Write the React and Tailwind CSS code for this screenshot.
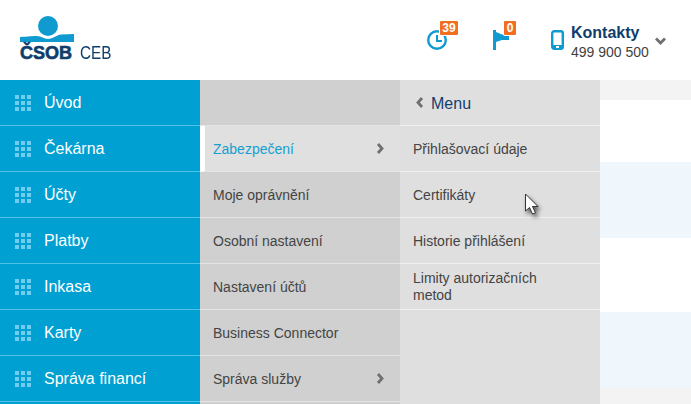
import React from 'react';

const mainLinks = ['Úvod', 'Čekárna', 'Účty', 'Platby', 'Inkasa', 'Karty', 'Správa financí'];
const subLinks = [
  { label: 'Zabezpečení', active: true, arrow: true },
  { label: 'Moje oprávnění' },
  { label: 'Osobní nastavení' },
  { label: 'Nastavení účtů' },
  { label: 'Business Connector' },
  { label: 'Správa služby', arrow: true },
];
const thirdLinks = ['Přihlašovací údaje', 'Certifikáty', 'Historie přihlášení', 'Limity autorizačních metod'];

function GridIcon() {
  return (
    <svg width="16" height="16" viewBox="0 0 16 16" className="shrink-0 fill-[#6fcdf0]">
      {[0, 6, 12].map((y) =>
        [0, 6, 12].map((x) => <rect key={`${x}-${y}`} x={x} y={y} width="4" height="4" />)
      )}
    </svg>
  );
}

function Chevron({ left }) {
  return (
    <svg width="8" height="11" viewBox="0 0 8 11" className="fill-none stroke-[#6f6f6f] stroke-[2.8]">
      <path d={left ? 'M6 1 L2 5.5 L6 10' : 'M2 1 L6 5.5 L2 10'} />
    </svg>
  );
}

function Logo() {
  return (
    <div className="flex flex-col items-start w-[92px]">
      <svg width="54" height="26" viewBox="0 0 54 26" className="block">
        <path d="M0 21 C8 20.5 13 20 17 20 C21 20 24 23 28 23 C33 23 36 19 41 18.5 L54 18 L54 26 L0 26 Z" fill="#0f9bd0" />
        <circle cx="28" cy="10" r="11" fill="#ffffff" />
        <circle cx="28" cy="10" r="10" fill="#0f9bd0" />
      </svg>
      <div className="flex items-baseline mt-[1px] leading-[20px] whitespace-nowrap text-[#0f3d6b]">
        <span className="text-[18px] font-bold [-webkit-text-stroke:0.6px_#0f3d6b]">ČSOB</span>
        <span className="ml-[8px] text-[18px] scale-x-[0.85] origin-left">CEB</span>
      </div>
    </div>
  );
}

function Badge({ className, children }) {
  return (
    <span className={`absolute top-[-9px] h-[14px] rounded-[1px] bg-[#f26f21] text-white text-[12px] leading-[14px] font-bold text-center ring-1 ring-white ${className}`}>
      {children}
    </span>
  );
}

export default function App() {
  return (
    <div className="w-[691px] h-[404px] overflow-hidden relative bg-white font-['Liberation_Sans',Arial,sans-serif]">
      {/* Header */}
      <header className="h-[80px] flex items-start bg-white">
        <div className="w-[400px] pl-[20px] pt-[16px]">
          <Logo />
        </div>
        <div className="flex-1 flex items-start pt-[24px]">
          <div className="relative ml-[27px] mt-[6px] w-[20px] h-[20px]">
            <svg width="20" height="20" viewBox="0 0 20 20" className="fill-none stroke-[#0f9bd0] stroke-[2.4]">
              <circle cx="10" cy="10" r="8.8" />
              <path d="M10 5 V11 H15" strokeWidth="2" />
            </svg>
            <Badge className="left-[13px] w-[18px]">39</Badge>
          </div>
          <div className="relative ml-[46px] mt-[6px] w-[16px] h-[20px]">
            <svg width="16" height="20" viewBox="0 0 16 20" className="fill-[#0f9bd0]">
              <rect x="0" y="0" width="3" height="20" />
              <path d="M3 2 L9 4.5 L16 4.5 L16 10 L9 10 L3 12 Z" />
            </svg>
            <Badge className="left-[11px] w-[12px]">0</Badge>
          </div>
          <svg width="13" height="20" viewBox="0 0 13 20" className="ml-[42px] mt-[6px]">
            <rect x="1.2" y="1.2" width="10.6" height="17.6" rx="2" fill="none" stroke="#0f9bd0" strokeWidth="2.4" />
            <rect x="1" y="15" width="11" height="4" fill="#0f9bd0" />
            <rect x="5" y="16" width="3" height="2" fill="#ffffff" />
          </svg>
          <div className="ml-[7px]">
            <div className="text-[16px] leading-[18px] font-bold text-[#0f3d6b]">Kontakty</div>
            <div className="text-[14px] leading-[20px] text-[#3f3f3f]">499 900 500</div>
          </div>
          <svg width="11" height="8" viewBox="0 0 11 8" className="ml-[6px] mt-[13px] fill-none stroke-[#6f6f6f] stroke-[2.8]">
            <path d="M1 1.5 L5.5 6 L10 1.5" />
          </svg>
        </div>
      </header>

      <div className="flex h-[324px]">
        {/* Main menu */}
        <nav className="w-[200px] bg-[#00a0d2]">
          {mainLinks.map((label) => (
            <div key={label} className="h-[46px] flex items-center pl-[15px] border-b border-[#4fc0e6] text-white text-[16px]">
              <GridIcon />
              <span className="ml-[13px]">{label}</span>
            </div>
          ))}
        </nav>

        {/* Second level */}
        <nav className="w-[200px] bg-[#d0d0d0]">
          <div className="h-[46px] border-b border-[#e4e4e4]" />
          {subLinks.map((item) => (
            <div
              key={item.label}
              className={`h-[46px] flex items-center justify-between pr-4 border-b border-[#e4e4e4] text-[14px] ${
                item.active ? 'bg-[#e0e0e0] text-[#159fd0] border-l-[5px] border-l-white pl-2' : 'pl-[13px] text-[#444444]'
              }`}
            >
              <span className="pt-[2px]">{item.label}</span>
              {item.arrow && <Chevron />}
            </div>
          ))}
        </nav>

        {/* Third level */}
        <nav className="w-[200px] bg-[#dfdfdf]">
          <div className="h-[46px] flex items-center gap-[7px] pl-[16px] border-b border-[#f0f0f0] text-[16px] text-[#14406e]">
            <Chevron left />
            <span className="pt-[2px]">Menu</span>
          </div>
          {thirdLinks.map((label, i) => (
            <div key={label} className="h-[46px] flex items-center pl-[13px] pr-8 border-b border-[#f0f0f0] text-[14px] leading-[17px] text-[#444444]">
              <span className={i === 3 ? '' : 'pt-[2px]'}>{label}</span>
            </div>
          ))}
        </nav>

        {/* Page behind the menu */}
        <div className="flex-1 flex flex-col bg-[#f3f3f3]">
          <div className="h-[20px]" />
          <div className="h-[62px] bg-white" />
          <div className="h-[76px] bg-[#f0f7fc]" />
          <div className="h-[74px] bg-white" />
          <div className="h-[75px] bg-[#f0f7fc]" />
        </div>
      </div>

      {/* Mouse cursor */}
      <svg width="18" height="24" viewBox="0 0 18 24" className="absolute left-[524px] top-[193px] drop-shadow-[2px_3px_2px_rgba(0,0,0,0.6)]">
        <path d="M1.5 1 L1.5 18 L5.5 14.5 L8.5 21 L11.5 20 L8.5 13.5 L14 13.5 Z" fill="#ffffff" stroke="#333333" strokeWidth="1" />
      </svg>
    </div>
  );
}
